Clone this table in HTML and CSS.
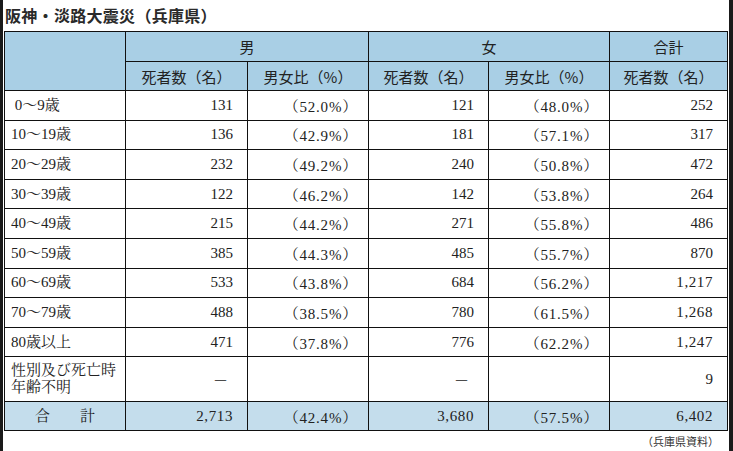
FILE: index.html
```html
<!DOCTYPE html>
<html lang="ja">
<head>
<meta charset="utf-8">
<link rel="stylesheet" href="styles.css">
</head>
<body>
<div class="frame">
  <h1 class="title">阪神・淡路大震災（兵庫県）</h1>
  <table class="tbl">
    <colgroup>
      <col class="c0"><col class="c1"><col class="c2"><col class="c3"><col class="c4"><col class="c5">
    </colgroup>
    <thead>
      <tr class="h1">
        <th rowspan="2"></th>
        <th colspan="2">男</th>
        <th colspan="2">女</th>
        <th>合計</th>
      </tr>
      <tr class="h2">
        <th>死者数（名）</th>
        <th>男女比（%）</th>
        <th>死者数（名）</th>
        <th>男女比（%）</th>
        <th>死者数（名）</th>
      </tr>
    </thead>
    <tbody>
      <tr><td class="lbl">&nbsp;0～9歳</td><td class="num">131</td><td class="pct">（52.0%）</td><td class="num">121</td><td class="pct">（48.0%）</td><td class="num">252</td></tr>
      <tr><td class="lbl">10～19歳</td><td class="num">136</td><td class="pct">（42.9%）</td><td class="num">181</td><td class="pct">（57.1%）</td><td class="num">317</td></tr>
      <tr><td class="lbl">20～29歳</td><td class="num">232</td><td class="pct">（49.2%）</td><td class="num">240</td><td class="pct">（50.8%）</td><td class="num">472</td></tr>
      <tr><td class="lbl">30～39歳</td><td class="num">122</td><td class="pct">（46.2%）</td><td class="num">142</td><td class="pct">（53.8%）</td><td class="num">264</td></tr>
      <tr><td class="lbl">40～49歳</td><td class="num">215</td><td class="pct">（44.2%）</td><td class="num">271</td><td class="pct">（55.8%）</td><td class="num">486</td></tr>
      <tr><td class="lbl">50～59歳</td><td class="num">385</td><td class="pct">（44.3%）</td><td class="num">485</td><td class="pct">（55.7%）</td><td class="num">870</td></tr>
      <tr><td class="lbl">60～69歳</td><td class="num">533</td><td class="pct">（43.8%）</td><td class="num">684</td><td class="pct">（56.2%）</td><td class="num wide">1,217</td></tr>
      <tr><td class="lbl">70～79歳</td><td class="num">488</td><td class="pct">（38.5%）</td><td class="num">780</td><td class="pct">（61.5%）</td><td class="num wide">1,268</td></tr>
      <tr><td class="lbl">80歳以上</td><td class="num">471</td><td class="pct">（37.8%）</td><td class="num">776</td><td class="pct">（62.2%）</td><td class="num wide">1,247</td></tr>
      <tr class="unk"><td class="lbl">性別及び死亡時<br>年齢不明</td><td class="num dash">－</td><td class="pct"></td><td class="num dash">－</td><td class="pct"></td><td class="num">9</td></tr>
      <tr class="total"><td class="lbl tot">合　　計</td><td class="num wide">2,713</td><td class="pct">（42.4%）</td><td class="num wide">3,680</td><td class="pct">（57.5%）</td><td class="num wide">6,402</td></tr>
    </tbody>
  </table>
  <div class="src">（兵庫県資料）</div>
</div>
</body>
</html>
```
FILE: styles.css
```css
html, body {
  margin: 0;
  padding: 0;
  background: #1a1a1a;
}
.frame {
  width: 726px;
  height: 451px;
  margin-left: 3px;
  background: #fff;
  box-sizing: border-box;
  padding: 0 0 0 1px;
  overflow: hidden;
}
.title {
  margin: 0;
  padding: 6px 0 0 1px;
  height: 25px;
  box-sizing: border-box;
  font-family: "Noto Sans CJK JP", sans-serif;
  font-weight: bold;
  font-size: 16px;
  line-height: 18px;
  color: #2a2a2a;
  letter-spacing: 0.3px;
}
.tbl {
  border-collapse: collapse;
  table-layout: fixed;
  width: 724px;
  margin-top: 6px;
  font-family: "Liberation Serif", "Noto Serif CJK JP", "Noto Sans CJK JP", serif;
  font-size: 15px;
  color: #222;
}
.c0 { width: 121px; }
.c1 { width: 122px; }
.c2 { width: 121px; }
.c3 { width: 120px; }
.c4 { width: 121px; }
.c5 { width: 118px; }
.tbl th, .tbl td {
  border: 1px solid #111;
  padding: 0;
}
.tbl th {
  background: #a9cfe5;
  font-family: "Noto Sans CJK JP", sans-serif;
  font-weight: normal;
  font-size: 15px;
  color: #222;
  text-align: center;
}
.h1 { height: 30px; }
.h2 { height: 29px; }
.tbl tbody tr { height: 29.6px; }
.tbl tbody tr.unk { height: 45px; }
.tbl tbody tr.total { height: 29px; background: #c4ddec; }
.lbl {
  text-align: left;
  padding-left: 6px !important;
  line-height: 17px;
}
.tot {
  text-align: center !important;
  padding-left: 0 !important;
}
.num {
  text-align: right;
  padding-right: 14px !important;
}
.wide {
  letter-spacing: 0.6px;
}
.dash {
  padding-right: 19px !important;
}
.pct {
  text-align: right;
  padding-right: 10px !important;
  letter-spacing: 0.8px;
}
.src {
  text-align: right;
  padding: 3px 10px 0 0;
  font-family: "Noto Sans CJK JP", sans-serif;
  font-size: 11px;
  line-height: 14px;
  color: #333;
}
```
